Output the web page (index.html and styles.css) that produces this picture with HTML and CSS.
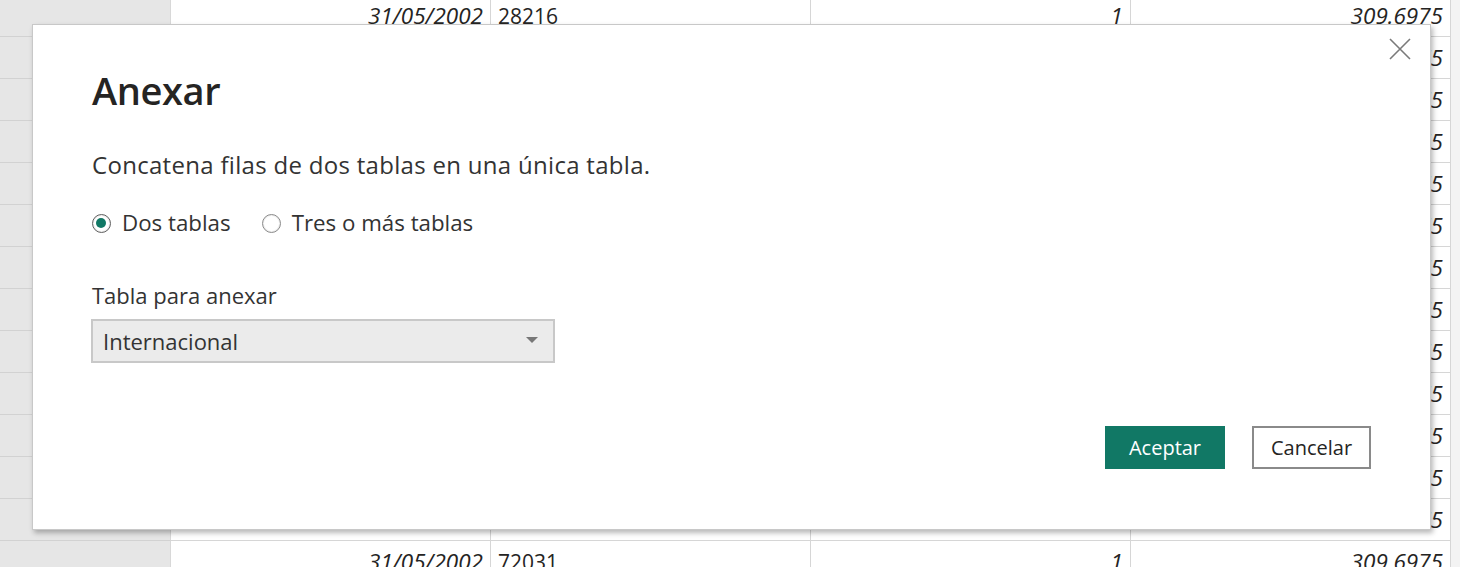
FILE: index.html
```html
<!DOCTYPE html>
<html lang="es">
<head>
<meta charset="utf-8">
<title>Anexar</title>
<link rel="stylesheet" href="styles.css">
</head>
<body>
<div class="sheet">
  <div class="row"><div class="c0"></div><div class="c r it">31/05/2002</div><div class="c">28216</div><div class="c r it">1</div><div class="c r it">309.6975</div><div class="ce"></div></div>
  <div class="row"><div class="c0"></div><div class="c r it">31/05/2002</div><div class="c">28216</div><div class="c r it">1</div><div class="c r it">309.6975</div><div class="ce"></div></div>
  <div class="row"><div class="c0"></div><div class="c r it">31/05/2002</div><div class="c">28216</div><div class="c r it">1</div><div class="c r it">309.6975</div><div class="ce"></div></div>
  <div class="row"><div class="c0"></div><div class="c r it">31/05/2002</div><div class="c">28216</div><div class="c r it">1</div><div class="c r it">309.6975</div><div class="ce"></div></div>
  <div class="row"><div class="c0"></div><div class="c r it">31/05/2002</div><div class="c">28216</div><div class="c r it">1</div><div class="c r it">309.6975</div><div class="ce"></div></div>
  <div class="row"><div class="c0"></div><div class="c r it">31/05/2002</div><div class="c">28216</div><div class="c r it">1</div><div class="c r it">309.6975</div><div class="ce"></div></div>
  <div class="row"><div class="c0"></div><div class="c r it">31/05/2002</div><div class="c">28216</div><div class="c r it">1</div><div class="c r it">309.6975</div><div class="ce"></div></div>
  <div class="row"><div class="c0"></div><div class="c r it">31/05/2002</div><div class="c">28216</div><div class="c r it">1</div><div class="c r it">309.6975</div><div class="ce"></div></div>
  <div class="row"><div class="c0"></div><div class="c r it">31/05/2002</div><div class="c">28216</div><div class="c r it">1</div><div class="c r it">309.6975</div><div class="ce"></div></div>
  <div class="row"><div class="c0"></div><div class="c r it">31/05/2002</div><div class="c">28216</div><div class="c r it">1</div><div class="c r it">309.6975</div><div class="ce"></div></div>
  <div class="row"><div class="c0"></div><div class="c r it">31/05/2002</div><div class="c">28216</div><div class="c r it">1</div><div class="c r it">309.6975</div><div class="ce"></div></div>
  <div class="row"><div class="c0"></div><div class="c r it">31/05/2002</div><div class="c">28216</div><div class="c r it">1</div><div class="c r it">309.6975</div><div class="ce"></div></div>
  <div class="row"><div class="c0"></div><div class="c r it">31/05/2002</div><div class="c">28216</div><div class="c r it">1</div><div class="c r it">309.6975</div><div class="ce"></div></div>
  <div class="row"><div class="c0"></div><div class="c r it">31/05/2002</div><div class="c">72031</div><div class="c r it">1</div><div class="c r it">309.6975</div><div class="ce"></div></div>
</div>

<div class="dialog" role="dialog" aria-label="Anexar">
  <button class="close" aria-label="Cerrar">
    <svg width="22" height="22" viewBox="0 0 22 22"><path d="M1 1 L21 21 M21 1 L1 21" stroke="#7a7a7a" stroke-width="1.6" fill="none"/></svg>
  </button>
  <h1 class="title">Anexar</h1>
  <p class="desc">Concatena filas de dos tablas en una única tabla.</p>
  <div class="radios">
    <label class="radio"><span class="dot on"></span>Dos tablas</label>
    <label class="radio"><span class="dot"></span>Tres o más tablas</label>
  </div>
  <div class="label">Tabla para anexar</div>
  <div class="select"><span>Internacional</span><span class="caret"></span></div>
  <div class="spacer"></div>
  <div class="actions">
    <button class="btn primary">Aceptar</button>
    <button class="btn secondary">Cancelar</button>
  </div>
</div>
</body>
</html>
```
FILE: styles.css
```css
* { box-sizing: border-box; }
html, body { margin: 0; padding: 0; }
body {
  width: 1460px;
  height: 567px;
  overflow: hidden;
  background: #ffffff;
  font-family: "Open Sans", "Noto Sans", sans-serif;
  color: #252423;
  position: relative;
}
.sheet {
  margin-top: -5px;
  display: flex;
  flex-direction: column;
}
.row {
  display: flex;
  height: 42px;
}
.c0 {
  width: 171px;
  background: #e6e6e6;
  border-bottom: 1px solid #d2d2d2;
  border-right: 1px solid #d8d8d8;
}
.c {
  width: 320px;
  border-right: 1px solid #d6d6d6;
  border-bottom: 1px solid #d6d6d6;
  padding: 0 7px;
  display: flex;
  align-items: center;
  font-size: 21px;
  white-space: nowrap;
  overflow: hidden;
}
.c.r { justify-content: flex-end; }
.it { font-style: italic; font-size: 22.5px; }
.ce {
  flex: 1;
  background: #f3f3f3;
}

.dialog {
  position: absolute;
  left: 32px;
  top: 24px;
  width: 1399px;
  height: 506px;
  background: #ffffff;
  border: 1px solid #c8c8c8;
  box-shadow: 2px 3px 5px rgba(0,0,0,0.28);
  padding: 39px 59px 60px 59px;
  display: flex;
  flex-direction: column;
}
.close {
  position: absolute;
  right: 19px;
  top: 13px;
  width: 22px;
  height: 22px;
  padding: 0;
  border: 0;
  background: transparent;
  display: block;
}
.close svg { display: block; }
.title {
  margin: 0;
  font-size: 38px;
  font-weight: 600;
  line-height: 52px;
  letter-spacing: -0.4px;
  color: #252423;
}
.desc {
  margin: 34px 0 0 0;
  font-size: 24px;
  letter-spacing: 0.3px;
  line-height: 30px;
  color: #333333;
}
.radios {
  margin-top: 28px;
  display: flex;
  gap: 31px;
  font-size: 22.3px;
  line-height: 30px;
  color: #333333;
}
.radio {
  display: flex;
  align-items: center;
}
.dot {
  width: 19px;
  height: 19px;
  border-radius: 50%;
  border: 1.5px solid #8a8a8a;
  background: #ffffff;
  margin-right: 11px;
  position: relative;
  box-shadow: inset 0 0 0 1px #eeeeee;
}
.dot.on {
  border-color: #5f5f5f;
}
.dot.on::after {
  content: "";
  position: absolute;
  left: 3px;
  top: 3px;
  width: 10px;
  height: 10px;
  border-radius: 50%;
  background: #117865;
}
.label {
  margin-top: 42px;
  font-size: 22px;
  line-height: 30px;
  color: #333333;
}
.select {
  margin-top: 9px;
  margin-left: -1px;
  width: 464px;
  height: 44px;
  background: #ebebeb;
  border: 2px solid #c8c8c8;
  display: flex;
  align-items: center;
  justify-content: space-between;
  padding: 0 15px 0 10px;
  font-size: 22px;
  color: #333333;
}
.caret {
  width: 0;
  height: 0;
  border-left: 6px solid transparent;
  border-right: 6px solid transparent;
  border-top: 6px solid #777777;
  margin-top: -3px;
}
.spacer { flex: 1; }
.actions {
  display: flex;
  justify-content: flex-end;
  gap: 27px;
}
.btn {
  width: 120px;
  height: 43px;
  font-family: "Open Sans", "Noto Sans", sans-serif;
  font-size: 20px;
  padding: 0;
  cursor: pointer;
}
.primary {
  background: #117865;
  color: #ffffff;
  border: 0;
}
.secondary {
  background: #ffffff;
  color: #252423;
  border: 2px solid #8a8a8a;
  width: 119px;
}
```
